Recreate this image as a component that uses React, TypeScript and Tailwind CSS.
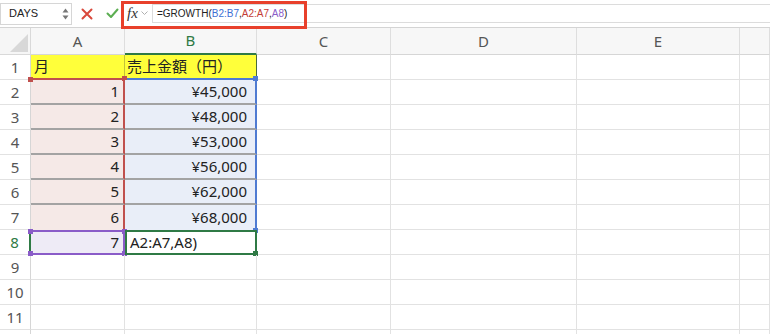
import React from "react";

const font = { fontFamily: '"Noto Sans", "Noto Sans CJK JP", sans-serif' };

const cols = ["A", "B", "C", "D", "E", ""];

type Row = { n: number; a?: string; b?: string };

const rows: Row[] = [
  { n: 1, a: "月", b: "売上金額（円）" },
  { n: 2, a: "1", b: "¥45,000" },
  { n: 3, a: "2", b: "¥48,000" },
  { n: 4, a: "3", b: "¥53,000" },
  { n: 5, a: "4", b: "¥56,000" },
  { n: 6, a: "5", b: "¥62,000" },
  { n: 7, a: "6", b: "¥68,000" },
  { n: 8, a: "7", b: "A2:A7,A8)" },
  { n: 9 },
  { n: 10 },
  { n: 11 },
  { n: 12 },
];

function aClass(n: number) {
  if (n === 1) return "bg-[#ffff3a] justify-start pl-[3px] border-r border-r-[#c2c23a] border-b-2 border-b-[#c0504d]";
  if (n >= 2 && n <= 6) return "bg-[#f5e9e7] justify-end pr-[4px] border-r-2 border-r-[#c0504d] border-b-2 border-b-[#a3a3a3]";
  if (n === 7) return "bg-[#f5e9e7] justify-end pr-[4px] border-r-2 border-r-[#c0504d]";
  if (n === 8) return "bg-[#eeebf6] justify-end pr-[4px] border-t-2 border-t-[#8a5cc8] border-b-2 border-b-[#8a5cc8] border-r-2 border-r-[#8a5cc8]";
  return "border-r border-b border-[#e2e2e2]";
}

function bClass(n: number) {
  if (n === 1) return "bg-[#ffff3a] justify-start pl-[2px] border-r border-r-[#4a6b3a] border-b-2 border-b-[#4f7bd2]";
  if (n >= 2 && n <= 6) return "bg-[#e9eef8] justify-end pr-[8px] border-r-2 border-r-[#4f7bd2] border-b-2 border-b-[#a3a3a3]";
  if (n === 7) return "bg-[#e9eef8] justify-end pr-[8px] border-r-2 border-r-[#4f7bd2]";
  if (n === 8) return "bg-white justify-start pl-[3px] border-2 border-[#2f7a45]";
  return "border-r border-b border-[#e2e2e2]";
}

function Dot({ className }: { className: string }) {
  return <span className={`absolute w-[5px] h-[5px] ${className}`} />;
}

export default function App() {
  return (
    <div className="w-[770px] h-[334px] overflow-hidden bg-white text-[#222]" style={font}>
      {/* Toolbar */}
      <div className="h-[27px] flex items-center relative bg-white">
        <div
          className="w-[72px] h-[22px] border border-[#d6d6d6] flex items-center justify-between pl-[8px] pr-[2px] text-[11px]"
          style={{ fontFamily: '"Liberation Sans", sans-serif' }}
        >
          <span>DAYS</span>
          <span className="flex flex-col items-center gap-[2px]">
            <svg width="7" height="5" viewBox="0 0 7 5"><path d="M0.5 4.5 L3.5 0.5 L6.5 4.5 Z" fill="#777" /></svg>
            <svg width="7" height="5" viewBox="0 0 7 5"><path d="M0.5 0.5 L3.5 4.5 L6.5 0.5 Z" fill="#777" /></svg>
          </span>
        </div>
        <div className="w-[30px] flex justify-center">
          <svg width="12" height="12" viewBox="0 0 12 12"><path d="M1.5 1.5 L10.5 10.5 M10.5 1.5 L1.5 10.5" stroke="#d9483b" strokeWidth="2" strokeLinecap="round" /></svg>
        </div>
        <div className="w-[20px] flex justify-center">
          <svg width="13" height="11" viewBox="0 0 13 11"><path d="M1.5 5.5 L5 9 L11.5 1.5" stroke="#5cae52" strokeWidth="2" fill="none" strokeLinecap="round" strokeLinejoin="round" /></svg>
        </div>
        <div className="w-[30px] flex items-center gap-[3px] pl-[5px]">
          <span className="italic text-[15px] text-[#333] leading-none" style={{ fontFamily: '"Liberation Serif", serif' }}>fx</span>
          <svg width="7" height="5" viewBox="0 0 7 5"><path d="M0.5 0.5 L3.5 3.5 L6.5 0.5" stroke="#b0b0b0" fill="none" /></svg>
        </div>
        <div
          className="flex-1 h-[19px] border border-r-0 border-[#dcdcdc] flex items-center pl-[4px] text-[10px]"
          style={{ fontFamily: '"Liberation Sans", sans-serif' }}
        >
          <span>=GROWTH(</span>
          <span className="text-[#3d6fd4]">B2:B7</span>
          <span>,</span>
          <span className="text-[#c43b35]">A2:A7</span>
          <span>,</span>
          <span className="text-[#8a5cc8]">A8</span>
          <span>)</span>
        </div>
        {/* annotation frame over the formula */}
        <div className="absolute left-[121px] top-[1px] w-[186px] h-[28px] border-[3px] border-[#e8402b] pointer-events-none z-10" />
      </div>

      {/* Grid */}
      <div className="grid grid-cols-[31px_94px_132px_134px_186px_163px_1fr] grid-rows-[27px_repeat(12,25px)] border-t border-[#d4d4d4]">
        <div className="bg-[#f6f6f6] border-r border-b border-[#d9d9d9] flex items-end justify-end p-[2px]">
          <svg width="18" height="18" viewBox="0 0 18 18"><path d="M18 0 L18 18 L0 18 Z" fill="#d8d8d8" /></svg>
        </div>
        {cols.map((c, i) => (
          <div
            key={c + i}
            className={`flex items-center justify-center text-[15px] border-r border-[#dedede] bg-[#f7f7f7] ${
              c === "B" ? "text-[#2f7a45] border-b-2 border-b-[#2f7a45]" : "text-[#555] border-b border-b-[#d6d6d6]"
            }`}
          >
            {c}
          </div>
        ))}
        {rows.map((r) => (
          <React.Fragment key={r.n}>
            <div
              className={`flex items-center justify-center text-[15px] bg-white border-b border-[#e2e2e2] ${
                r.n === 8 ? "text-[#2f7a45] border-r-2 border-r-[#2f7a45]" : "text-[#555] border-r border-r-[#d6d6d6]"
              }`}
            >
              {r.n < 12 ? r.n : ""}
            </div>
            <div className={`relative flex items-center text-[15px] ${aClass(r.n)}`}>
              {r.a}
              {r.n === 2 && <Dot className="-left-[3px] -top-[3px] bg-[#c0504d]" />}
              {r.n === 2 && <Dot className="-right-[4px] -top-[4px] bg-[#c0504d]" />}
              {r.n === 8 && <Dot className="-left-[3px] -top-[3px] bg-[#8a5cc8]" />}
              {r.n === 8 && <Dot className="-left-[3px] -bottom-[3px] bg-[#8a5cc8]" />}
              {r.n === 8 && <Dot className="-right-[4px] -top-[3px] bg-[#8a5cc8]" />}
              {r.n === 8 && <Dot className="-right-[4px] -bottom-[3px] bg-[#8a5cc8]" />}
            </div>
            <div className={`relative flex items-center text-[15px] ${bClass(r.n)}`}>
              {r.b}
              {r.n === 2 && <Dot className="-right-[3px] -top-[4px] bg-[#4f7bd2]" />}
              {r.n === 7 && <Dot className="-right-[3px] -bottom-[3px] bg-[#4f7bd2]" />}
              {r.n === 8 && <Dot className="-right-[3px] -bottom-[3px] bg-[#2f7a45]" />}
            </div>
            <div className="border-r border-b border-[#e2e2e2]" />
            <div className="border-r border-b border-[#e2e2e2]" />
            <div className="border-r border-b border-[#e2e2e2]" />
            <div className="border-r border-b border-[#e2e2e2]" />
          </React.Fragment>
        ))}
      </div>
    </div>
  );
}
